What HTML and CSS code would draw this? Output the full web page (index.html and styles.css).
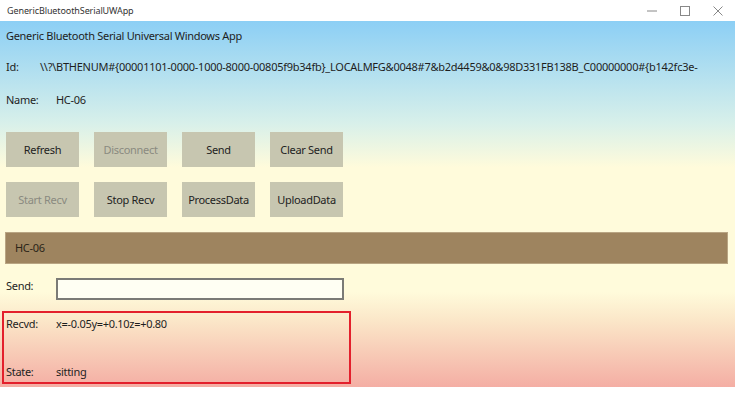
FILE: index.html
```html
<!DOCTYPE html>
<html lang="en">
<head>
  <meta charset="UTF-8" />
  <title>GenericBluetoothSerialUWApp</title>
  <link rel="stylesheet" href="styles.css">
</head>
<body>
  <!-- title bar -->
  <div class="titlebar">
    <span class="app-title">GenericBluetoothSerialUWApp</span>
    <div class="win-controls">
      <svg viewBox="0 0 10 10"><line x1="0" y1="5" x2="10" y2="5" stroke="#888" stroke-width="1"/></svg>
      <svg viewBox="0 0 10 10"><rect x="0.5" y="0.5" width="9" height="9" fill="none" stroke="#888" stroke-width="1"/></svg>
      <svg viewBox="0 0 10 10"><path d="M0.5 0.5 L9.5 9.5 M9.5 0.5 L0.5 9.5" stroke="#888" stroke-width="1"/></svg>
    </div>
  </div>

  <div class="app">
    <div class="heading">Generic Bluetooth Serial Universal Windows App</div>

    <div class="row id-row">
      <span class="label id-label">Id:</span>
      <span class="value id-value">\\?\BTHENUM#{00001101-0000-1000-8000-00805f9b34fb}_LOCALMFG&amp;0048#7&amp;b2d4459&amp;0&amp;98D331FB138B_C00000000#{b142fc3e-fa4e-460b-8abc-072b628b3c70}</span>
    </div>

    <div class="row name-row">
      <span class="label">Name:</span>
      <span class="value">HC-06</span>
    </div>

    <div class="buttons">
      <button class="btn">Refresh</button>
      <button class="btn" disabled>Disconnect</button>
      <button class="btn">Send</button>
      <button class="btn">Clear Send</button>
      <button class="btn" disabled>Start Recv</button>
      <button class="btn">Stop Recv</button>
      <button class="btn">ProcessData</button>
      <button class="btn">UploadData</button>
    </div>

    <div class="device-list">
      <div class="device">HC-06</div>
    </div>

    <div class="row send-row">
      <span class="label">Send:</span>
      <input class="send-input" type="text">
    </div>

    <div class="recv-box">
      <div class="row">
        <span class="label">Recvd:</span>
        <span class="value">x=-0.05y=+0.10z=+0.80</span>
      </div>
      <div class="row">
        <span class="label">State:</span>
        <span class="value">sitting</span>
      </div>
    </div>
  </div>
</body>
</html>
```

FILE: styles.css
```css
* { box-sizing: border-box; }
body {
  margin: 0;
  background: #fff;
  font-family: 'Noto Sans', sans-serif;
  font-size: 11px;
  letter-spacing: -0.3px;
  line-height: 16px;
  color: #1e1e1e;
}
.titlebar {
  height: 21px;
  display: flex;
  align-items: center;
  justify-content: space-between;
  padding-left: 7px;
}
.app-title {
  font-size: 9px;
  letter-spacing: -0.1px;
  color: #333;
}
.win-controls {
  display: flex;
  gap: 23px;
  padding-right: 17px;
}
.win-controls svg {
  width: 10px;
  height: 10px;
}
.app {
  width: 735px;
  height: 366px;
  padding: 7px 5px 0 5px;
  background: linear-gradient(to bottom, #8ccff5 0%, #d8f0ea 28%, #fffbdb 40%, #fffbdb 74%, #fbe6c8 82%, #f4aea4 100%);
  display: flex;
  flex-direction: column;
}
.heading {
  padding-left: 1px;
  height: 30px;
}
.row {
  display: flex;
  align-items: center;
}
.label {
  width: 51px;
  flex-shrink: 0;
  padding-left: 1px;
}
.id-row {
  height: 20px;
  align-items: flex-start;
  overflow: hidden;
  padding-top: 1px;
}
.id-label { width: 35px; }
.id-value {
  max-width: 672px;
  letter-spacing: -0.25px;
}
.name-row {
  margin-top: 11px;
  height: 22px;
}
.buttons {
  display: grid;
  grid-template-columns: repeat(4, 73px);
  grid-auto-rows: 35px;
  column-gap: 15px;
  row-gap: 15px;
  margin-top: 21px;
  padding-left: 1px;
}
.btn {
  border: none;
  background: #c7c6b0;
  font-family: inherit;
  font-size: 11px;
  letter-spacing: -0.3px;
  color: #222;
  padding: 0;
}
.btn:disabled { color: #8a8a80; }
.device-list {
  margin-top: 15px;
}
.device {
  height: 32px;
  width: 723px;
  background: #9e845f;
  border: 1px solid #b9a583;
  display: flex;
  align-items: center;
  padding-left: 9px;
  color: #2b2418;
}
.send-row {
  margin-top: 14px;
  height: 22px;
  align-items: flex-start;
}
.send-input {
  width: 288px;
  height: 22px;
  border: 2px solid #7b7b76;
  background: #fffff3;
}
.recv-box {
  margin-top: 11px;
  margin-left: -3px;
  width: 349px;
  height: 73px;
  border: 2px solid #e3202c;
  display: flex;
  flex-direction: column;
  justify-content: space-between;
  padding: 2px 0 1px 1px;
}
.recv-box .row { height: 18px; }
```
